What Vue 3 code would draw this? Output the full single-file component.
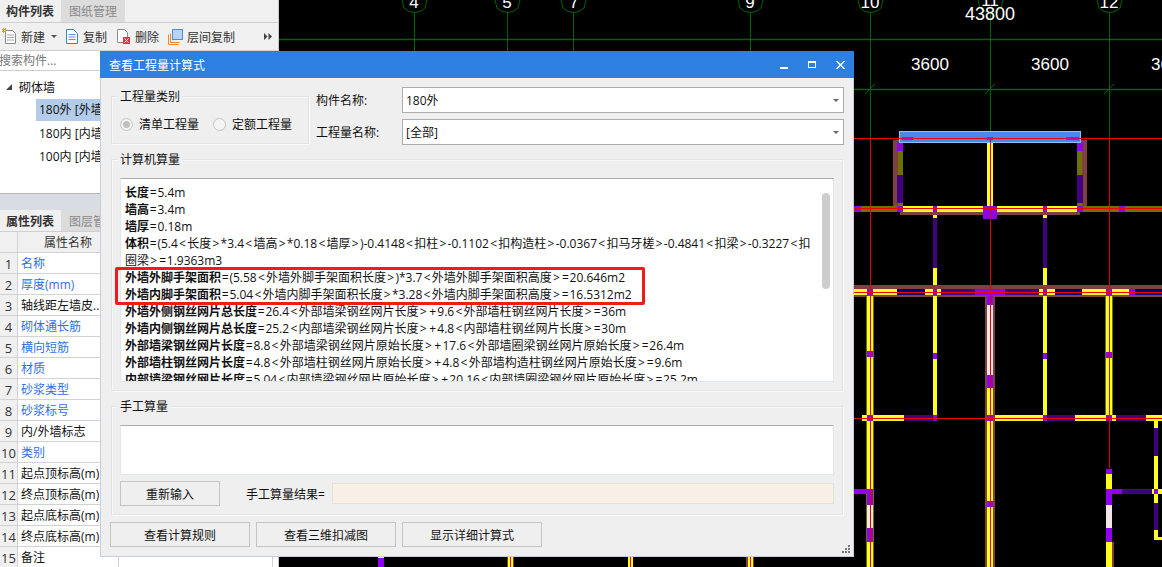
<template>
  <div class="page">
    <aside class="side">
      <div class="tabs">
        <span class="tab tab-on">构件列表</span>
        <span class="tab tab-off">图纸管理</span>
      </div>
      <div class="toolbar">
        <span class="tool">
          <svg width="15" height="17" viewBox="0 0 15 17">
            <path d="M3.5 2.5h7l3 3v10h-10z" fill="#fff" stroke="#8a8a8a" />
            <path d="M5 7h7M5 9.5h7M5 12h7" stroke="#a8a8a8" />
            <path d="M0 1h4v1H0zM0 3h4v1H0zM1 0h1v5H1zM3 0h1v1H3z" fill="#f09020" />
          </svg>
          <span>新建</span>
          <i class="caret"></i>
        </span>
        <span class="tool tool-copy">
          <svg width="14" height="17" viewBox="0 0 14 17">
            <path d="M1.5 1.5h7l4 4v10h-11z" fill="#fff" stroke="#3f7fc4" />
            <path d="M3.5 6.5h7M3.5 9h7M3.5 11.5h7" stroke="#5d96d2" />
          </svg>
          <span>复制</span>
        </span>
        <span class="tool tool-del">
          <svg width="15" height="17" viewBox="0 0 15 17">
            <path d="M1.5 1.5h7l3 3v10h-10z" fill="#fff" stroke="#8a8a8a" />
            <rect x="7" y="9" width="7" height="7" fill="#d83a3a" />
            <path d="M8.5 10.5l4 4M12.5 10.5l-4 4" stroke="#fff" />
          </svg>
          <span>删除</span>
        </span>
        <span class="tool tool-floor">
          <svg width="15" height="16" viewBox="0 0 15 16">
            <path d="M.5 15.5v-10M.5 15.5h10" stroke="#f08a24" fill="none" />
            <path d="M2.5 13.5v-9M2.5 13.5h9" stroke="#f08a24" fill="none" />
            <rect x="4.5" y=".5" width="10" height="10" fill="#b8d4f4" stroke="#4f8ed4" />
          </svg>
          <span>层间复制</span>
        </span>
        <svg class="more" width="8" height="7" viewBox="0 0 8 7">
          <path d="M0 0l3.5 3.5L0 7zM4.5 0L8 3.5 4.5 7z" fill="#444" />
        </svg>
      </div>
      <div class="search">搜索构件...</div>
      <div class="tree">
        <div class="tree-root"><i class="tree-arrow"></i>砌体墙</div>
        <div v-for="(item, i) in walls" :key="item" class="tree-item" :class="{ selected: i === 0 }">{{ item }}</div>
      </div>
      <div class="split"></div>
      <div class="tabs tabs-low">
        <span class="tab tab-on">属性列表</span>
        <span class="tab tab-off tab-cut">图层管理</span>
      </div>
      <div class="props">
        <div class="prop-row prop-head">
          <span class="prop-no"></span>
          <span class="prop-name">属性名称</span>
          <span class="prop-val"></span>
        </div>
        <div v-for="(p, i) in props" :key="p.name" class="prop-row">
          <span class="prop-no">{{ i + 1 }}</span>
          <span class="prop-name" :class="{ blue: p.blue }">{{ p.name }}</span>
          <span class="prop-val"></span>
        </div>
      </div>
    </aside>

    <div class="canvas">
      <svg width="883" height="567" viewBox="279 0 883 567">
        <g stroke="#006400" fill="none">
          <path d="M279 39.5H1162M854 89.5H1162" stroke-width="1.4" />
          <path v-for="x in [414, 507, 573, 750]" :key="x" :d="`M${x}.5 12V51`" />
          <path v-for="x in [870, 990, 1109]" :key="x" :d="`M${x}.5 12V138M${x - 5} 94l10-10`" />
          <path v-for="x in [414, 507, 573, 750, 870, 990, 1109]" :key="'b' + x"
            :d="`M${x - 12} 0l2 8 5 3.5 5.5 1 5.5-1 5-3.5 2-8`" />
        </g>
        <g fill="#fff" font-family="'Liberation Sans', sans-serif" font-size="17" text-anchor="middle">
          <text x="414" y="8">4</text>
          <text x="507" y="8">5</text>
          <text x="574" y="8">7</text>
          <text x="750" y="8">9</text>
          <text x="870" y="8">10</text>
          <text x="990" y="6">11</text>
          <text x="1109" y="8">12</text>
          <text x="990" y="20" font-size="18">43800</text>
          <text x="930" y="70">3600</text>
          <text x="1050" y="70">3600</text>
          <text x="1170" y="70">3600</text>
        </g>
        <rect v-for="(r, i) in walls2" :key="i" :x="r[0]" :y="r[1]" :width="r[2]" :height="r[3]" :fill="r[4]" />
        <rect x="899.5" y="131.5" width="181" height="11" fill="#4a8ae6" stroke="#8ec0ff" />
        <path d="M854 138.5H1162M854 208.5H1162M854 292.5H1162M854 418.5H1162" stroke="#f00000" />
        <path d="M870.5 138V567M990.5 138V567M1109.5 138V468" stroke="#e00000" />
        <path d="M902 138.5h11M1066 138.5h13M987 138.5h6" stroke="#d000a0" stroke-width="3" />
      </svg>
    </div>

    <section class="dialog">
      <header class="dlg-title">
        <span>查看工程量计算式</span>
        <div class="dlg-btns">
          <i class="btn-min"></i>
          <i class="btn-max"></i>
          <svg width="9" height="8" viewBox="0 0 9 8"><path d="M.5 0l8 8M8.5 0l-8 8" stroke="#fff" stroke-width="1.4" /></svg>
        </div>
      </header>
      <div class="dlg-body">
        <div class="top">
          <div class="group kind">
            <span class="legend">工程量类别</span>
            <label class="radio"><i class="dot dot-on"></i>清单工程量</label>
            <label class="radio"><i class="dot"></i>定额工程量</label>
          </div>
          <div class="form">
            <span>构件名称:</span>
            <div class="select">180外<i class="sel-arrow"></i></div>
            <span>工程量名称:</span>
            <div class="select">[全部]<i class="sel-arrow"></i></div>
          </div>
        </div>

        <div class="group calc">
          <span class="legend">计算机算量</span>
          <div class="calc-wrap">
            <div class="calc-text">
              <div v-for="(l, i) in lines" :key="i" class="line">
                <b>{{ l[0] }}</b><span v-for="(s, j) in pieces(l[1])" :key="j" :class="symClass(s)">{{ s }}</span>
              </div>
              <div class="scroll"></div>
            </div>
            <div class="mark"></div>
          </div>
        </div>

        <div class="group manual">
          <span class="legend">手工算量</span>
          <div class="area"></div>
          <div class="manual-row">
            <button class="btn btn-redo">重新输入</button>
            <span class="res-label">手工算量结果=</span>
            <div class="res"></div>
          </div>
        </div>

        <div class="foot">
          <button class="btn">查看计算规则</button>
          <button class="btn">查看三维扣减图</button>
          <button class="btn">显示详细计算式</button>
        </div>
      </div>
      <svg class="grip" width="8" height="8" viewBox="0 0 8 8">
        <path d="M6 0h2v2H6zM3 3h2v2H3zM6 3h2v2H6zM0 6h2v2H0zM3 6h2v2H3zM6 6h2v2H6z" fill="#777" />
      </svg>
    </section>
  </div>
</template>

<script setup>
const walls = ['180外 [外墙]', '180内 [内墙]', '100内 [内墙]']

const props = [
  { name: '名称', blue: true },
  { name: '厚度(mm)', blue: true },
  { name: '轴线距左墙皮..' },
  { name: '砌体通长筋', blue: true },
  { name: '横向短筋', blue: true },
  { name: '材质', blue: true },
  { name: '砂浆类型', blue: true },
  { name: '砂浆标号', blue: true },
  { name: '内/外墙标志' },
  { name: '类别', blue: true },
  { name: '起点顶标高(m)' },
  { name: '终点顶标高(m)' },
  { name: '起点底标高(m)' },
  { name: '终点底标高(m)' },
  { name: '备注' },
]

const lines = [
  ['长度', '=5.4m'],
  ['墙高', '=3.4m'],
  ['墙厚', '=0.18m'],
  ['体积', '=(5.4<长度>*3.4<墙高>*0.18<墙厚>)-0.4148<扣柱>-0.1102<扣构造柱>-0.0367<扣马牙槎>-0.4841<扣梁>-0.3227<扣'],
  ['', '圈梁>=1.9363m3'],
  ['外墙外脚手架面积', '=(5.58<外墙外脚手架面积长度>)*3.7<外墙外脚手架面积高度>=20.646m2'],
  ['外墙内脚手架面积', '=5.04<外墙内脚手架面积长度>*3.28<外墙内脚手架面积高度>=16.5312m2'],
  ['外墙外侧钢丝网片总长度', '=26.4<外部墙梁钢丝网片长度>+9.6<外部墙柱钢丝网片长度>=36m'],
  ['外墙内侧钢丝网片总长度', '=25.2<内部墙梁钢丝网片长度>+4.8<内部墙柱钢丝网片长度>=30m'],
  ['外部墙梁钢丝网片长度', '=8.8<外部墙梁钢丝网片原始长度>+17.6<外部墙圈梁钢丝网片原始长度>=26.4m'],
  ['外部墙柱钢丝网片长度', '=4.8<外部墙柱钢丝网片原始长度>+4.8<外部墙构造柱钢丝网片原始长度>=9.6m'],
  ['内部墙梁钢丝网片长度', '=5.04<内部墙梁钢丝网片原始长度>+20.16<内部墙圈梁钢丝网片原始长度>=25.2m'],
]

// the brackets and signs are wider in the original font
const pieces = (text) => text.split(/([<>+=])/).filter(Boolean)
const symClass = (s) => {
  if (s === '=') return 'eq'
  if (s === '<' || s === '>' || s === '+') return 'sym'
  return ''
}

const Y = '#ffff20'
const P = '#9000f0'
const D = '#400080'
const N = '#000070'
const B = '#804040'
const O = '#707000'
const W = '#f2e6e6'

// x, y, w, h, fill
const walls2 = [
  // top room
  [893, 140, 5, 66, B], [898, 140, 5, 68, O], [897, 142, 6, 9, P], [897, 175, 6, 28, D],
  [1082, 140, 5, 66, B], [1077, 140, 5, 68, O], [1077, 142, 6, 9, P], [1077, 175, 6, 28, D],
  [987, 142, 6, 64, Y],
  [854, 206, 43, 6, O], [1083, 206, 79, 6, O], [900, 212, 180, 3, B],
  [903, 206, 174, 6, Y], [854, 206, 7, 6, P], [1119, 206, 6, 6, P],
  [897, 206, 6, 6, P], [1077, 206, 6, 6, P], [933, 206, 4, 6, P], [1043, 206, 4, 6, P],
  [983, 206, 14, 13, P],
  [933, 215, 4, 3, Y], [933, 218, 4, 50, D], [933, 268, 4, 17, Y],
  [1043, 215, 4, 3, Y], [1043, 218, 4, 50, D], [1043, 268, 4, 17, Y],
  // second band
  [854, 285, 308, 4, B], [854, 295, 308, 2, B], [854, 289, 308, 6, Y],
  [867, 289, 6, 6, P], [897, 289, 28, 6, N], [933, 289, 4, 6, P], [941, 289, 34, 6, D],
  [975, 289, 30, 6, P], [1005, 289, 34, 6, D], [1043, 289, 4, 6, P], [1055, 289, 27, 6, N],
  [1106, 289, 6, 6, P], [1129, 289, 6, 6, P], [1135, 289, 27, 6, N],
  // verticals
  [866, 296, 8, 271, O], [867, 296, 6, 271, Y], [867, 351, 6, 6, P],
  [933, 296, 4, 121, Y], [933, 353, 4, 6, P],
  [1043, 296, 4, 121, Y], [1043, 353, 4, 6, P],
  [1105, 296, 8, 121, O], [1106, 296, 6, 121, Y], [1106, 352, 6, 6, P],
  [985, 296, 10, 271, B], [987, 296, 6, 271, Y], [987, 296, 6, 9, P], [987, 305, 6, 70, W],
  [987, 375, 6, 13, P], [987, 501, 6, 6, P],
  // third band
  [862, 415, 42, 6, Y], [904, 415, 28, 6, D], [933, 415, 4, 6, P], [867, 415, 6, 6, P],
  [995, 415, 48, 6, Y], [1043, 415, 4, 6, P], [1048, 415, 27, 6, D], [1075, 415, 31, 6, Y],
  [987, 415, 6, 6, P], [1106, 415, 6, 6, P], [1112, 415, 4, 6, Y], [1116, 415, 30, 6, D],
  [1146, 415, 16, 6, Y],
  // lower left and lower right
  [854, 489, 19, 5, P], [867, 489, 6, 16, P], [867, 505, 6, 23, W], [867, 528, 6, 14, P],
  [1106, 469, 6, 5, P], [1106, 474, 6, 15, Y], [1106, 489, 6, 16, P], [1106, 505, 6, 23, W],
  [1106, 528, 6, 14, P], [1106, 542, 6, 25, Y], [1112, 542, 2, 25, B],
  [1112, 489, 10, 5, P], [1122, 489, 30, 5, D], [1152, 489, 10, 5, Y],
  [1154, 421, 4, 116, Y], [1154, 428, 4, 28, D], [1154, 503, 4, 27, D], [1154, 489, 4, 5, P],
  [1154, 537, 8, 3, Y],
  // stubs below the dialog
  [378, 557, 6, 10, P], [378, 557, 6, 1, W], [507, 557, 7, 10, B], [508, 557, 5, 10, Y], [510, 557, 1, 10, '#f00000'],
  [628, 557, 5, 10, Y], [630, 557, 1, 10, '#f00000'], [746, 557, 8, 10, B], [748, 557, 5, 10, Y],
  [750, 557, 1, 10, '#f00000'],
]
</script>

<style>
html, body {
  margin: 0;
  background: #000;
}
</style>

<style scoped>
.page {
  position: relative;
  display: flex;
  width: 1162px;
  height: 567px;
  overflow: hidden;
  font-family: "Open Sans", "Noto Sans CJK SC", sans-serif;
  font-size: 12px;
  color: #111;
}

.side {
  width: 279px;
  flex: none;
  background: #fff;
  border-right: 1px solid #c8c8c8;
  box-sizing: border-box;
}
.tabs {
  display: flex;
  height: 23px;
  background: #f0f0f0;
  border-bottom: 1px solid #cfcfcf;
  box-sizing: border-box;
}
.tabs-low {
  height: 22px;
}
.tab {
  display: flex;
  align-items: center;
  justify-content: center;
  width: 60px;
  font-weight: 700;
  color: #333;
}
.tab-off {
  width: 64px;
  margin-left: 1px;
  background: #dcdcdc;
  color: #8a8a8a;
  font-weight: 400;
}
.tab-cut {
  justify-content: flex-start;
  padding-left: 8px;
  box-sizing: border-box;
}
.toolbar {
  display: flex;
  align-items: center;
  height: 28px;
  padding-left: 2px;
  background: #f0f0f0;
  border-bottom: 1px solid #cfcfcf;
  box-sizing: border-box;
  color: #333;
  white-space: nowrap;
}
.tool {
  display: flex;
  align-items: center;
  gap: 4px;
  flex: none;
}
.tool-copy {
  margin-left: 8px;
}
.tool-del,
.tool-floor {
  margin-left: 9px;
}
.caret {
  width: 0;
  height: 0;
  margin-left: 2px;
  border: 3px solid transparent;
  border-top: 3px solid #555;
  border-bottom: 0;
}
.more {
  margin-left: 29px;
  flex: none;
}
.search {
  height: 20px;
  line-height: 19px;
  margin-left: -1px;
  color: #777;
  border-bottom: 1px solid #cfcfcf;
  box-sizing: border-box;
}
.tree {
  height: 122px;
  padding-top: 3px;
  box-sizing: border-box;
}
.tree-root {
  display: flex;
  align-items: center;
  height: 25px;
  padding-left: 6px;
}
.tree-arrow {
  width: 0;
  height: 0;
  margin-right: 7px;
  border-left: 6px solid transparent;
  border-bottom: 6px solid #444;
}
.tree-item {
  height: 22px;
  line-height: 22px;
  margin: 0 0 1.5px 36px;
  padding-left: 3px;
  white-space: nowrap;
}
.selected {
  background: #b3cce9;
}
.split {
  height: 17px;
  background: #d9dce3;
  border-top: 1px solid #b8b8b8;
  box-sizing: border-box;
}
.props {
  height: 335px;
}
.prop-row {
  display: grid;
  grid-template-columns: 18px 101px 154px;
  height: 21px;
  line-height: 22px;
}
.prop-row span {
  border-right: 1px solid #d2d2d2;
  border-bottom: 1px solid #d2d2d2;
  box-sizing: border-box;
  white-space: nowrap;
  overflow: hidden;
}
.prop-no {
  background: #f0f0f0;
  text-align: center;
  color: #333;
  font-size: 13px;
}
.prop-name {
  padding-left: 3px;
}
.prop-head .prop-name {
  background: #f0f0f0;
  padding: 0;
  text-align: center;
  color: #333;
}
.prop-head .prop-val {
  background: #f0f0f0;
}
.blue {
  color: #2f6fe8;
}

.canvas {
  flex: 1;
  background: #000;
}
.canvas svg {
  display: block;
}

.dialog {
  position: absolute;
  left: 100px;
  top: 51px;
  width: 754px;
  height: 506px;
  display: flex;
  flex-direction: column;
  background: #efefef;
  border: 1px solid #c6cede;
  border-top: 0;
  box-sizing: border-box;
}
.dlg-title {
  display: flex;
  align-items: center;
  justify-content: space-between;
  height: 27px;
  margin: 0 -1px;
  padding: 0 9px;
  background: #2d7fe0;
  color: #fff;
  flex: none;
}
.dlg-btns {
  display: flex;
  align-items: center;
  gap: 20px;
  height: 8px;
}
.btn-min {
  width: 8px;
  height: 2px;
  margin-top: 6px;
  background: #fff;
}
.btn-max {
  width: 6px;
  height: 4px;
  border: 1px solid #fff;
  border-top-width: 2px;
}
.dlg-body {
  padding: 0 9px 0 10px;
}
.top {
  display: flex;
  gap: 7px;
}
.group {
  position: relative;
  border: 1px solid #e4e4e4;
  box-shadow: inset 1px 1px 0 #f8f8f8, 1px 1px 0 #fafafa;
  box-sizing: border-box;
}
.legend {
  position: absolute;
  top: -9px;
  left: 6px;
  padding: 0 2px;
  background: #efefef;
  line-height: 18px;
}
.kind {
  display: flex;
  align-items: center;
  width: 198px;
  height: 48px;
  margin-top: 18px;
  padding: 8px 0 0 8px;
}
.radio {
  display: flex;
  align-items: center;
  gap: 6px;
  margin-right: 14px;
  white-space: nowrap;
}
.dot {
  position: relative;
  width: 13px;
  height: 13px;
  border: 1px solid #c4c4c4;
  border-radius: 50%;
  box-sizing: border-box;
  background: #f4f4f4;
}
.dot-on::after {
  content: "";
  position: absolute;
  inset: 2px;
  border-radius: 50%;
  background: #c0c0c0;
}
.form {
  display: grid;
  grid-template-columns: 86px 442px;
  grid-auto-rows: 26px;
  row-gap: 6px;
  margin-top: 9px;
  align-items: center;
}
.select {
  position: relative;
  height: 26px;
  line-height: 25px;
  padding-left: 3px;
  background: #fff;
  border: 1px solid #acacac;
  box-sizing: border-box;
}
.sel-arrow {
  position: absolute;
  right: 4px;
  top: 11px;
  width: 0;
  height: 0;
  border: 3px solid transparent;
  border-top: 3px solid #666;
  border-bottom: 0;
}
.calc {
  width: 732px;
  height: 232px;
  margin-top: 14px;
  padding: 18px 8px 8px;
}
.calc-wrap {
  position: relative;
}
.calc-text {
  position: relative;
  height: 204px;
  padding: 5px 0 0 4px;
  background: #fff;
  border: 1px solid #e2e6ee;
  border-top-color: #acacac;
  box-sizing: border-box;
  overflow: hidden;
}
.line {
  height: 17px;
  line-height: 17px;
  white-space: nowrap;
}
.sym {
  padding: 0 1.25px;
}
.eq {
  padding: 0 0.75px;
}
.scroll {
  position: absolute;
  right: 3px;
  top: 14px;
  width: 8px;
  height: 96px;
  border-radius: 4px;
  background: #cdcdcd;
}
.mark {
  position: absolute;
  left: -5px;
  top: 89px;
  width: 530px;
  height: 38px;
  border: 3px solid #f01c1c;
  border-radius: 2px;
  box-sizing: border-box;
}
.manual {
  width: 732px;
  height: 109px;
  margin-top: 15px;
  padding: 18px 8px 0;
}
.area {
  height: 50px;
  background: #fff;
  border: 1px solid #e2e6ee;
  border-top-color: #acacac;
  box-sizing: border-box;
}
.manual-row {
  display: flex;
  align-items: center;
  height: 25px;
  margin-top: 6px;
}
.btn {
  width: 140px;
  height: 25px;
  padding: 0;
  background: #efefef;
  border: 1px solid #c4c4c4;
  font: inherit;
  color: #111;
}
.btn-redo {
  width: 100px;
}
.res-label {
  width: 86px;
  margin-left: 26px;
  white-space: nowrap;
}
.res {
  flex: 1;
  height: 21px;
  background: #f9efe6;
  border: 1px solid #e4e0da;
  box-sizing: border-box;
}
.foot {
  display: flex;
  gap: 6px;
  margin: 7px 0 0 -1px;
}
.grip {
  position: absolute;
  right: 3px;
  bottom: 3px;
}
</style>
